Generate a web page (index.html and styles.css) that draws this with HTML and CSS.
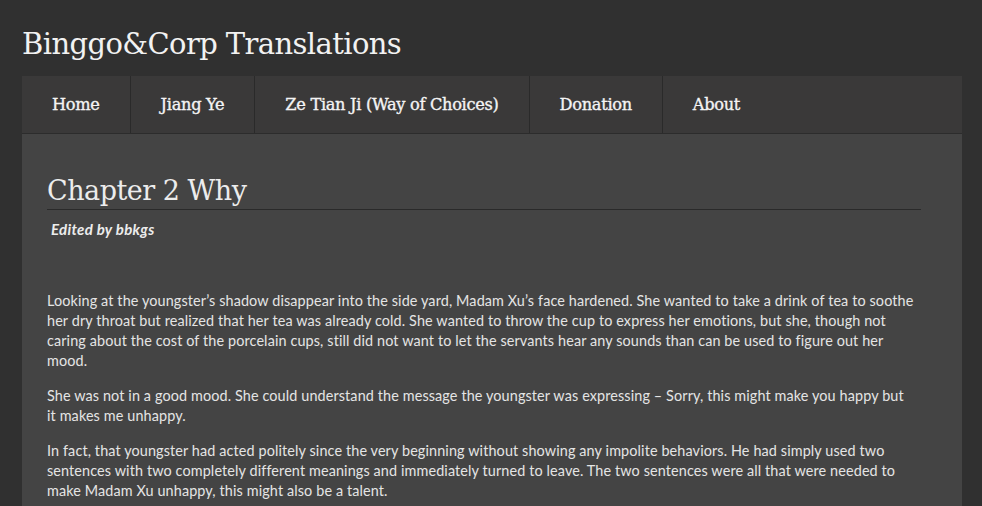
FILE: index.html
```html
<!DOCTYPE html>
<html lang="en">
<head>
<meta charset="utf-8">
<title>Chapter 2 Why – Binggo&amp;Corp Translations</title>
<link rel="stylesheet" href="styles.css">
</head>
<body>
<div class="page">
  <header class="site-header">
    <h1 class="site-title">Binggo&amp;Corp Translations</h1>
  </header>
  <nav class="main-nav">
    <a class="nav-item" href="#">Home</a>
    <a class="nav-item" href="#">Jiang Ye</a>
    <a class="nav-item" href="#">Ze Tian Ji (Way of Choices)</a>
    <a class="nav-item" href="#">Donation</a>
    <a class="nav-item nav-last" href="#">About</a>
  </nav>
  <main class="content">
    <h2 class="entry-title">Chapter 2 Why</h2>
    <p class="editor">Edited by bbkgs</p>
    <div class="entry">
      <p>Looking at the youngster’s shadow disappear into the side yard, Madam Xu’s face hardened. She wanted to take a drink of tea to soothe her dry throat but realized that her tea was already cold. She wanted to throw the cup to express her emotions, but she, though not caring about the cost of the porcelain cups, still did not want to let the servants hear any sounds than can be used to figure out her mood.</p>
      <p>She was not in a good mood. She could understand the message the youngster was expressing – Sorry, this might make you happy but it makes me unhappy.</p>
      <p>In fact, that youngster had acted politely since the very beginning without showing any impolite behaviors. He had simply used two sentences with two completely different meanings and immediately turned to leave. The two sentences were all that were needed to make Madam Xu unhappy, this might also be a talent.</p>
    </div>
  </main>
</div>
</body>
</html>
```

FILE: styles.css
```css
html, body {
  margin: 0;
  padding: 0;
  background: #303030;
}
body {
  font-family: "Lato", "Open Sans", sans-serif;
  color: #e8e8e8;
}
.page {
  width: 940px;
  margin: 0 0 0 22px;
}
.site-header {
  height: 76px;
  display: flex;
  align-items: flex-start;
}
.site-title {
  margin: 0;
  padding-top: 24px;
  font-family: "DejaVu Serif", serif;
  font-weight: normal;
  font-size: 29px;
  line-height: 40px;
  letter-spacing: -0.6px;
  color: #f2f2f2;
}
.main-nav {
  display: flex;
  height: 57px;
  background: #3a3939;
  border-bottom: 1px solid #2c2c2c;
}
.nav-item {
  display: flex;
  align-items: center;
  padding: 0 30px;
  font-family: "DejaVu Serif", serif;
  font-size: 16.2px;
  letter-spacing: -0.3px;
  color: #f4f4f4;
  -webkit-text-stroke: 0.35px #f4f4f4;
  text-decoration: none;
  border-right: 1px solid #2a2a2a;
}
.nav-last {
  border-right: none;
}
.content {
  background: #444444;
  padding: 39px 41px 20px 25px;
  min-height: 400px;
}
.entry-title {
  margin: 0;
  font-family: "DejaVu Serif", serif;
  font-weight: normal;
  font-size: 27px;
  line-height: 36px;
  letter-spacing: -0.5px;
  color: #ececec;
  border-bottom: 1px solid #2a2a2a;
  padding-bottom: 0;
}
.editor {
  margin: 9px 0 0 4px;
  font-size: 15px;
  font-weight: bold;
  font-style: italic;
  line-height: 20px;
  letter-spacing: 0.3px;
  color: #ececec;
}
.entry {
  margin-top: 52px;
  margin-right: 6px;
}
.entry p {
  margin: 0 0 15px;
  font-size: 14.4px;
  line-height: 20px;
  letter-spacing: 0.12px;
  color: #e4e4e4;
}
```
